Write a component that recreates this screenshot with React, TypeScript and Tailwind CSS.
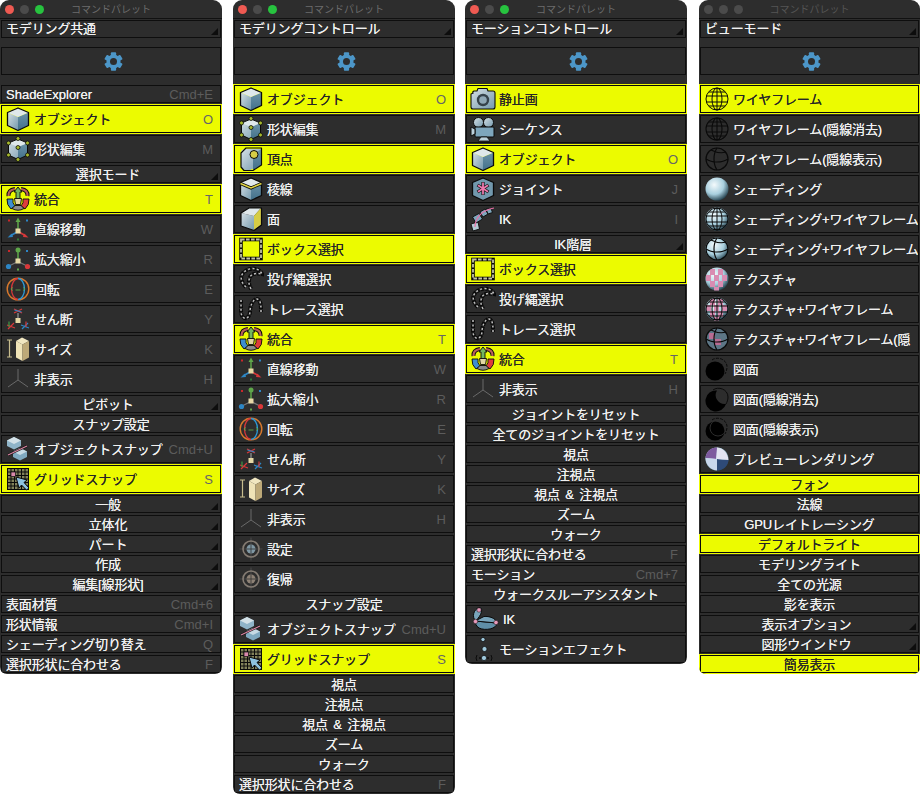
import type { ReactNode } from 'react'

type Row = {
  label: string
  kind: 'icon' | 'small' | 'center'
  icon?: ReactNode
  key?: string
  on?: boolean
  arrow?: boolean
}

const K = '#0a0a0a'

function Svg({ children }: { children: ReactNode }) {
  return (
    <svg viewBox="0 0 26 26" className="w-[26px] h-[26px] shrink-0" fill="none">
      {children}
    </svg>
  )
}

function CubeFaces({ right = 'url(#cubeR)' }: { right?: string }) {
  return (
    <>
      <path d="M13 11 L23.5 6.5 V19.5 L13 24.5z" fill={right} />
      <path d="M2.5 6.5 L13 11 V24.5 L2.5 19.5z" fill="url(#cubeL)" />
      <path d="M13 2 L23.5 6.5 L13 11 L2.5 6.5z" fill="#dfe8eb" />
      <path d="M13 2 L23.5 6.5 V19.5 L13 24.5 L2.5 19.5 V6.5z" stroke={K} strokeWidth="1.3" strokeLinejoin="round" />
    </>
  )
}

const Cube = () => <Svg><CubeFaces /></Svg>

function CubeEdit() {
  const pts = [[13, 2.5], [22.5, 7], [22.5, 19], [13, 23.5], [3.5, 19], [3.5, 7], [13, 11.5]]
  return (
    <Svg>
      <path d="M13 3 L22.5 7 V19 L13 23.5 L3.5 19 V7z" fill="url(#cubeL)" />
      <path d="M13 11 L22.5 7 V19 L13 23.5z" fill="url(#cubeR)" />
      <path d="M13 3 L22.5 7 L13 11 L3.5 7z" fill="#dfe8eb" />
      <path d="M13 3 L22.5 7 V19 L13 23.5 L3.5 19 V7z" stroke={K} strokeWidth="1" />
      {pts.map(([x, y]) => (
        <circle key={`${x}-${y}`} cx={x} cy={y} r="2" fill="#a6b92c" stroke={K} strokeWidth="0.8" />
      ))}
    </Svg>
  )
}

function Vertex() {
  return (
    <Svg>
      <path d="M3 7 Q3 3 7 3 L23 3 V19 L11 24.5 Q3 24 3 20z" fill="url(#cubeL)" />
      <path d="M15 24 L23.5 19 V3 L15 8z" fill="url(#cubeR)" />
      <path d="M3 7 L8 2 H23.5 V19 L15 24.5 H6 L3 21z" stroke={K} strokeWidth="1.2" strokeLinejoin="round" />
      <circle cx="16" cy="8.5" r="4" fill="#d6cd45" stroke={K} strokeWidth="1" />
    </Svg>
  )
}

function Edge() {
  return (
    <Svg>
      <CubeFaces />
      <path d="M2.5 7.5 L13 12 L23.5 7.5" stroke={K} strokeWidth="3" />
      <path d="M2.5 7.5 L13 12 L23.5 7.5" stroke="#e0d544" strokeWidth="1.6" />
    </Svg>
  )
}

function Face() {
  return (
    <Svg>
      <path d="M3 7 L16 10 V24.5 L3 20z" fill="url(#cubeL)" />
      <path d="M3 7 L11 2 H23 L16 10z" fill="#dfe8eb" />
      <path d="M16 10 L23 2 V19 L16 24.5z" fill="#d6cd45" />
      <path d="M3 7 L11 2 H23.5 V19 L16 24.5 L3 20z" stroke={K} strokeWidth="1.2" strokeLinejoin="round" />
    </Svg>
  )
}

function Merge() {
  return (
    <Svg>
      <path d="M3.5 10 Q3 4 10 3 M22.5 10 Q23 4 16 3" stroke={K} strokeWidth="4" />
      <path d="M3.5 10 Q3 4 10 3 M22.5 10 Q23 4 16 3" stroke="#b9605c" strokeWidth="2.2" />
      <path d="M2 13 Q1.5 19 6 23 L10 20 Q7 17 8 13z" fill="#3d8ed0" stroke={K} strokeWidth="0.9" />
      <path d="M24 13 Q24.5 19 20 23 L16 20 Q19 17 18 13z" fill="#de3c3c" stroke={K} strokeWidth="0.9" />
      <path d="M7 22.5 Q13 26 19 22.5 L16 19.5 H10z" fill="#8b8b8b" stroke={K} strokeWidth="0.9" />
      <path d="M13 1 L17 6 H15 V13 H11 V6 H9z" fill="#75b65f" stroke={K} strokeWidth="0.9" />
      <path d="M9.5 12.5 H16.5 L15.5 18.5 H10.5z" fill="#e3d7a5" stroke={K} strokeWidth="0.9" />
    </Svg>
  )
}

function Move() {
  return (
    <Svg>
      <path d="M13 14 V5" stroke="#5fa84a" strokeWidth="1.5" />
      <path d="M13 1.5 L15.5 6 H10.5z" fill="#5fa84a" />
      <path d="M12 16 L5 20" stroke="#2d86c5" strokeWidth="1.5" />
      <path d="M2.5 21.5 L7 17.5 L8 21z" fill="#2d86c5" />
      <path d="M14 16 L21 20" stroke="#d8383a" strokeWidth="1.5" />
      <path d="M23.5 21.5 L19 17.5 L18 21z" fill="#d8383a" />
      <rect x="10.5" y="12.5" width="5" height="5" fill="#e6d9a6" />
      <rect x="3" y="3.5" width="2" height="2" fill="#c8282b" />
      <rect x="21" y="3.5" width="2" height="2" fill="#2d86c5" />
      <rect x="12" y="22.5" width="2" height="2" fill="#2f7b39" />
    </Svg>
  )
}

function Scale() {
  return (
    <Svg>
      <path d="M13 14 V5" stroke="#5fa84a" strokeWidth="1.5" />
      <path d="M12 16 L5 19.5 M14 16 L21 19.5" stroke="#777" strokeWidth="1.2" />
      <circle cx="13" cy="4" r="2.5" fill="#5fa84a" />
      <circle cx="3.5" cy="20.5" r="2.6" fill="#2d86c5" />
      <circle cx="22.5" cy="20.5" r="2.6" fill="#d8383a" />
      <rect x="10.5" y="12.5" width="5" height="5" fill="#e6d9a6" />
      <rect x="3" y="4" width="2" height="2" fill="#c8282b" />
      <rect x="21" y="4" width="2" height="2" fill="#2d86c5" />
      <rect x="12" y="22.5" width="2" height="2" fill="#5fa84a" />
    </Svg>
  )
}

function Rotate() {
  return (
    <Svg>
      <circle cx="13" cy="13" r="10.8" stroke="#d9792d" strokeWidth="1.4" />
      <path d="M13 2.5 A6.5 10.5 0 0 0 13 23.5" stroke="#d8383a" strokeWidth="1.3" />
      <path d="M13 2.5 A6.5 10.5 0 0 1 13 23.5" stroke="#2d9ad8" strokeWidth="1.3" />
      <path d="M10.5 14 H15.5 M6 13 L8 11.5 M6 13 L8 14.5 M20 13 L18 11.5 M20 13 L18 14.5" stroke="#5fa84a" strokeWidth="0.9" />
    </Svg>
  )
}

function Shear() {
  return (
    <Svg>
      <path d="M13 12 V7" stroke="#888" strokeWidth="1.4" />
      <path d="M9 3 L17 7 M9 7 L17 3" stroke="#d8383a" strokeWidth="1.3" />
      <path d="M9.5 4 L16.5 6" stroke="#2d86c5" strokeWidth="1.2" />
      <rect x="10.5" y="12" width="5" height="5" fill="#e6d9a6" />
      <path d="M2 19 L10 22 M3 23 L9 17" stroke="#d8383a" strokeWidth="1.2" />
      <path d="M4 15.5 L4 21" stroke="#3f9a46" strokeWidth="1.2" />
      <path d="M16 19 L24 22 M17 23 L23 17" stroke="#2d86c5" strokeWidth="1.2" />
      <path d="M21 15.5 L21 21" stroke="#d8383a" strokeWidth="1.2" />
    </Svg>
  )
}

function Size() {
  return (
    <Svg>
      <path d="M2 4 H7 M4.5 4 V21 M2 21 H7" stroke="#c8bd8e" strokeWidth="1.2" />
      <path d="M11 5 L17 1.5 L24 5 L17.5 8.5z" fill="#f1e7c1" />
      <path d="M11 5 L17.5 8.5 V25 L11 21.5z" fill="#efe3b7" />
      <path d="M17.5 8.5 L24 5 V21.5 L17.5 25z" fill="#bda978" />
    </Svg>
  )
}

function Hide() {
  return (
    <Svg>
      <path d="M13 3 V14 L3 21 M13 14 L23 21" stroke="#6a6a6a" strokeWidth="1" />
    </Svg>
  )
}

function ObjSnap() {
  return (
    <Svg>
      <path d="M2 4.5 L9 1 L16 4.5 V10 L9 13.5 L2 10z" fill="#8fb4c8" />
      <path d="M2 4.5 L9 1 L16 4.5 L9 8z" fill="#d3e1e7" />
      <path d="M8 15.5 L15 12 L22 15.5 V21 L15 24.5 L8 21z" fill="#7fa9c0" />
      <path d="M8 15.5 L15 12 L22 15.5 L15 19z" fill="#c6dae4" />
      <path d="M3 19 L22 10" stroke="#111" strokeWidth="2.2" />
      <path d="M3 19 L22 10" stroke="#dc86a3" strokeWidth="1.1" />
    </Svg>
  )
}

function GridSnap() {
  const lines = [2.5, 6, 9.5, 13, 16.5, 20, 23.5]
  return (
    <Svg>
      <rect x="2" y="2" width="22" height="22" fill="#82825a" />
      {lines.map(v => (
        <g key={v}>
          <path d={`M${v} 2 V24`} stroke={K} strokeWidth="1" />
          <path d={`M2 ${v} H24`} stroke={K} strokeWidth="1" />
        </g>
      ))}
      <rect x="6" y="6" width="4.5" height="4.5" fill="#d989ab" stroke={K} strokeWidth="0.7" />
      <path d="M11 11 L22 14 L19 16.5 L24 22 L21.5 24 L16.5 19 L14 22z" fill="#8fc3e0" stroke={K} strokeWidth="1" strokeLinejoin="round" />
    </Svg>
  )
}

function BoxSel() {
  return (
    <Svg>
      <rect x="3" y="3.5" width="20" height="19" stroke={K} strokeWidth="3.6" />
      <rect x="3" y="3.5" width="20" height="19" stroke="#c2c2a4" strokeWidth="1.8" strokeDasharray="3.6 1.4" />
    </Svg>
  )
}

function Chain({ d }: { d: string }) {
  return (
    <Svg>
      <path d={d} stroke={K} strokeWidth="4" strokeDasharray="3.6 0.8" />
      <path d={d} stroke="#c0c0c0" strokeWidth="1.5" strokeDasharray="2 2.4" />
    </Svg>
  )
}

const Lasso = () => <Chain d="M8 21 C2 16 1 8 9 4 C15 1 22 3 24 8 C20 7 14 7 12 11 C10 15 11 19 13 23" />
const Trace = () => <Chain d="M3 4 V15 C3 24 11 25 12 16 C12 10 15 3 19 3 C23 4 23 10 23 16" />

function Target({ inner }: { inner: string }) {
  return (
    <Svg>
      <path d="M13 1.5 V24.5 M1.5 13 H24.5" stroke="#4a4a4a" strokeWidth="1" />
      <circle cx="13" cy="13" r="8" stroke="#857c73" strokeWidth="1.6" />
      <circle cx="13" cy="13" r="4.5" fill={inner} />
      <path d="M13 8.5 V17.5 M8.5 13 H17.5" stroke="#333" strokeWidth="0.8" />
    </Svg>
  )
}

function Camera() {
  return (
    <Svg>
      <path d="M3 7 Q2 6 4 5 H7 L8 2.5 H17 L18 5 H23 Q25 5 25 7 V21 Q25 23 23 23 H3 Q1 23 1 21 V8z" fill="url(#cubeL)" stroke={K} strokeWidth="1.1" />
      <circle cx="13" cy="14" r="6.2" fill="#35424b" />
      <circle cx="13" cy="14" r="3.8" fill="#8fa8b6" />
    </Svg>
  )
}

function Movie() {
  return (
    <Svg>
      <circle cx="8.5" cy="6.5" r="5" fill="url(#cubeL)" stroke={K} strokeWidth="1" />
      <circle cx="18.5" cy="6.5" r="5" fill="url(#cubeL)" stroke={K} strokeWidth="1" />
      <rect x="5" y="11" width="19" height="10" rx="1" fill="#7ea6bc" stroke={K} strokeWidth="1" />
      <path d="M5 13 L1 11 V20 L5 18z" fill="#bcd0da" stroke={K} strokeWidth="1" />
      <path d="M11 21 L8 25 H20 L17 21z" fill="#bcd0da" stroke={K} strokeWidth="0.8" />
    </Svg>
  )
}

function Joint() {
  return (
    <Svg>
      <path d="M13 2 L23.5 6.5 V19.5 L13 24.5 L2.5 19.5 V6.5z" fill="#7298ad" stroke={K} strokeWidth="1.3" strokeLinejoin="round" />
      <path d="M13 6 V19 M7.5 9 L18.5 16 M18.5 9 L7.5 16" stroke="#111" strokeWidth="3.2" />
      <path d="M13 6.5 V18.5 M8 9.3 L18 15.7 M18 9.3 L8 15.7" stroke="#ec79ad" strokeWidth="1.8" />
    </Svg>
  )
}

function IkChain() {
  return (
    <Svg>
      <path d="M1 18 L8 16 L9.5 23 L3 25z" fill="#b4cad6" stroke={K} strokeWidth="0.9" />
      <path d="M2.5 11 L9 7.5 L12.5 13 L6 17z" fill="#7ea6bc" stroke={K} strokeWidth="0.9" />
      <path d="M10 6 L15 3 L18 8 L13 11z" fill="#7ea6bc" stroke={K} strokeWidth="0.9" />
      <path d="M16 3 L21 2.5 L22.5 6.5 L18 8z" fill="#7ea6bc" stroke={K} strokeWidth="0.9" />
      <path d="M5 21 C5 12 12 4 24 2" stroke="#e76fa5" strokeWidth="1.2" />
    </Svg>
  )
}

function IkHand() {
  return (
    <svg viewBox="0 0 30 26" className="w-[30px] h-[26px] shrink-0" fill="none">
      <path d="M9 1.5 C13 1 13 8 5.5 15 C2 11 3 4 9 1.5z" fill="#78a4ba" stroke={K} strokeWidth="1" />
      <path d="M5 15 L27 17 C27 23 15 25 9 22 C6 20 5 17 5 15z" fill="#5f8ea6" stroke={K} strokeWidth="1" />
      <path d="M5 15 L14 10.5 C19 10 26 12 27 17z" fill="#78a4ba" stroke={K} strokeWidth="1" />
      <circle cx="9" cy="4" r="2.2" fill="#e79abb" stroke={K} strokeWidth="0.5" />
      <circle cx="5.5" cy="15.5" r="2.2" fill="#e79abb" stroke={K} strokeWidth="0.5" />
      <circle cx="26" cy="16.5" r="2.2" fill="#e79abb" stroke={K} strokeWidth="0.5" />
    </svg>
  )
}

function MotionFx() {
  return (
    <Svg>
      <circle cx="13" cy="3.5" r="2.1" fill="#9fc8dc" stroke={K} strokeWidth="0.7" />
      <circle cx="14.5" cy="13" r="2.5" fill="#9fc8dc" stroke={K} strokeWidth="0.7" />
      <circle cx="14" cy="22" r="2.6" fill="#9fc8dc" stroke={K} strokeWidth="0.7" />
      <path d="M7 19 Q5 22 7 25 M21 19 Q23 22 21 25" stroke={K} strokeWidth="1" />
      <circle cx="10" cy="22" r="0.9" fill={K} />
      <circle cx="18" cy="22" r="0.9" fill={K} />
    </Svg>
  )
}

function GridLines({ w = 1 }: { w?: number }) {
  return (
    <g stroke={K} strokeWidth={w}>
      <circle cx="13" cy="13" r="11" />
      <ellipse cx="13" cy="13" rx="5" ry="11" />
      <path d="M13 2 V24 M2.5 10 H23.5 M2.5 16 H23.5 M5 6 H21 M5 20 H21" />
    </g>
  )
}

function HiddenLines() {
  return (
    <g stroke={K} strokeWidth="1.2">
      <circle cx="13" cy="13" r="11" />
      <path d="M2 13 C8 17 18 17 24 13 M13 2 C9 8 9 18 13 24 M7 4 C13 7 19 7 22 6" />
    </g>
  )
}

const Wire = () => <Svg><GridLines w={1} /></Svg>
const WireHide = () => <Svg><GridLines w={1.1} /></Svg>
const WireShow = () => <Svg><HiddenLines /></Svg>
const Shade = () => <Svg><circle cx="13" cy="13" r="11.5" fill="url(#ball)" /></Svg>

const ShadeWire = () => (
  <Svg>
    <circle cx="13" cy="13" r="11.5" fill="url(#ball)" />
    <GridLines w={1} />
  </Svg>
)

const ShadeHidden = () => (
  <Svg>
    <circle cx="13" cy="13" r="11.5" fill="url(#ball)" />
    <HiddenLines />
  </Svg>
)

function Checks() {
  const cells = [[6, 3], [14, 3], [2, 9], [10, 9], [18, 9], [6, 15], [14, 15], [10, 21]]
  return (
    <>
      <circle cx="13" cy="13" r="11.5" fill="url(#ball)" />
      <g clipPath="url(#ballClip)">
        {cells.map(([x, y]) => (
          <rect key={`${x}-${y}`} x={x} y={y} width="5" height="6" fill="#d98cb2" />
        ))}
      </g>
    </>
  )
}

const Tex = () => <Svg><Checks /></Svg>

const TexWire = () => (
  <Svg>
    <Checks />
    <GridLines w={1} />
  </Svg>
)

const TexHidden = () => (
  <Svg>
    <circle cx="13" cy="13" r="11" fill="#5d7686" />
    <path d="M5 7 H11 V13 H5z M11 13 H17 V19 H11z" fill="#b86c92" />
    <HiddenLines />
  </Svg>
)

const Draw1 = () => (
  <Svg>
    <circle cx="11" cy="15" r="9.5" fill="#000" />
    <path d="M8 4 C13 0 23 3 23 11 C23 14 22 16 21 18" stroke={K} strokeWidth="1" strokeDasharray="3 1.2" />
  </Svg>
)

const Draw2 = () => (
  <Svg>
    <path d="M13 4.5 A10.5 10.5 0 1 0 22 18 A9 9 0 0 1 13 4.5z" fill="#000" />
    <path d="M9 4 C14 0 24 3 24 11 C24 14 23 16 22 18" stroke={K} strokeWidth="1" />
  </Svg>
)

const Draw3 = () => (
  <Svg>
    <circle cx="11" cy="15" r="9.5" fill="#000" />
    <circle cx="14" cy="12" r="8" stroke="#2d2d2d" strokeWidth="1" />
    <path d="M8 4 C13 0 23 3 23 11 C23 14 22 16 21 18" stroke={K} strokeWidth="1" strokeDasharray="3 1.2" />
  </Svg>
)

const Preview = () => (
  <Svg>
    <circle cx="13" cy="13" r="11.5" fill="url(#ball)" />
    <path d="M13 1.5 C6 1.5 2 6 1.5 12 L12 13z" fill="#7d5a9e" />
    <path d="M13 13 L24.5 14 C24 20 20 24 13 24.5z" fill="#2e4a78" />
    <path d="M13 13 L13 1.5 C19 2 24 7 24.5 14z" fill="#e3e4f2" />
    <path d="M13 13 L13 24.5 C7 24 2 20 1.5 12z" fill="#c9d7ec" />
  </Svg>
)

const sel = (label: string, arrow = false): Row => ({ label, kind: 'center', arrow })
const sm = (label: string, key?: string): Row => ({ label, kind: 'small', key })
const ic = (label: string, icon: ReactNode, key?: string, on = false): Row => ({ label, kind: 'icon', icon, key, on })

const panels: { title: string; rows: Row[]; lights?: boolean; box: string }[] = [
  {
    title: 'モデリング共通',
    lights: true,
    box: 'w-[222px]',
    rows: [
      sm('ShadeExplorer', 'Cmd+E'),
      ic('オブジェクト', <Cube />, 'O', true),
      ic('形状編集', <CubeEdit />, 'M'),
      sel('選択モード', true),
      ic('統合', <Merge />, 'T', true),
      ic('直線移動', <Move />, 'W'),
      ic('拡大縮小', <Scale />, 'R'),
      ic('回転', <Rotate />, 'E'),
      ic('せん断', <Shear />, 'Y'),
      ic('サイズ', <Size />, 'K'),
      ic('非表示', <Hide />, 'H'),
      sel('ピボット', true),
      sel('スナップ設定'),
      ic('オブジェクトスナップ', <ObjSnap />, 'Cmd+U'),
      ic('グリッドスナップ', <GridSnap />, 'S', true),
      sel('一般', true),
      sel('立体化', true),
      sel('パート', true),
      sel('作成', true),
      sel('編集[線形状]', true),
      sm('表面材質', 'Cmd+6'),
      sm('形状情報', 'Cmd+I'),
      sm('シェーディング切り替え', 'Q'),
      sm('選択形状に合わせる', 'F'),
    ],
  },
  {
    title: 'モデリングコントロール',
    lights: true,
    box: 'w-[222px] ml-[11px]',
    rows: [
      ic('オブジェクト', <Cube />, 'O', true),
      ic('形状編集', <CubeEdit />, 'M'),
      ic('頂点', <Vertex />, undefined, true),
      ic('稜線', <Edge />),
      ic('面', <Face />),
      ic('ボックス選択', <BoxSel />, undefined, true),
      ic('投げ縄選択', <Lasso />),
      ic('トレース選択', <Trace />),
      ic('統合', <Merge />, 'T', true),
      ic('直線移動', <Move />, 'W'),
      ic('拡大縮小', <Scale />, 'R'),
      ic('回転', <Rotate />, 'E'),
      ic('せん断', <Shear />, 'Y'),
      ic('サイズ', <Size />, 'K'),
      ic('非表示', <Hide />, 'H'),
      ic('設定', <Target inner="#7f97a3" />),
      ic('復帰', <Target inner="#8d8175" />),
      sel('スナップ設定'),
      ic('オブジェクトスナップ', <ObjSnap />, 'Cmd+U'),
      ic('グリッドスナップ', <GridSnap />, 'S', true),
      sel('視点'),
      sel('注視点'),
      sel('視点 & 注視点'),
      sel('ズーム'),
      sel('ウォーク'),
      sm('選択形状に合わせる', 'F'),
    ],
  },
  {
    title: 'モーションコントロール',
    lights: true,
    box: 'w-[222px] ml-[10px]',
    rows: [
      ic('静止画', <Camera />, undefined, true),
      ic('シーケンス', <Movie />),
      ic('オブジェクト', <Cube />, 'O', true),
      ic('ジョイント', <Joint />, 'J'),
      ic('IK', <IkChain />, 'I'),
      sel('IK階層', true),
      ic('ボックス選択', <BoxSel />, undefined, true),
      ic('投げ縄選択', <Lasso />),
      ic('トレース選択', <Trace />),
      ic('統合', <Merge />, 'T', true),
      ic('非表示', <Hide />, 'H'),
      sel('ジョイントをリセット'),
      sel('全てのジョイントをリセット'),
      sel('視点'),
      sel('注視点'),
      sel('視点 & 注視点'),
      sel('ズーム'),
      sel('ウォーク'),
      sm('選択形状に合わせる', 'F'),
      sm('モーション', 'Cmd+7'),
      sel('ウォークスルーアシスタント'),
      ic('IK', <IkHand />),
      ic('モーションエフェクト', <MotionFx />),
    ],
  },
  {
    title: 'ビューモード',
    box: 'w-[221px] ml-[12px]',
    rows: [
      ic('ワイヤフレーム', <Wire />, undefined, true),
      ic('ワイヤフレーム(隠線消去)', <WireHide />),
      ic('ワイヤフレーム(隠線表示)', <WireShow />),
      ic('シェーディング', <Shade />),
      ic('シェーディング+ワイヤフレーム', <ShadeWire />),
      ic('シェーディング+ワイヤフレーム', <ShadeHidden />),
      ic('テクスチャ', <Tex />),
      ic('テクスチャ+ワイヤフレーム', <TexWire />),
      ic('テクスチャ+ワイヤフレーム(隠', <TexHidden />),
      ic('図面', <Draw1 />),
      ic('図面(隠線消去)', <Draw2 />),
      ic('図面(隠線表示)', <Draw3 />),
      ic('プレビューレンダリング', <Preview />),
      { ...sel('フォン'), on: true },
      sel('法線'),
      sel('GPUレイトレーシング'),
      { ...sel('デフォルトライト'), on: true },
      sel('モデリングライト'),
      sel('全ての光源'),
      sel('影を表示'),
      sel('表示オプション', true),
      sel('図形ウインドウ', true),
      { ...sel('簡易表示'), on: true },
    ],
  },
]

function Corner() {
  return <span className="absolute right-[2px] bottom-[2px] w-[7px] h-[7px] bg-[#0d0d0d] [clip-path:polygon(100%_0,100%_100%,0_100%)]" />
}

function PaletteRow({ row }: { row: Row }) {
  const tone = row.on
    ? 'bg-[#ecfb00] border-[#0a0a0a] ring-1 ring-[#ecfb00] text-[#262626]'
    : 'bg-[#2d2d2d] border-[#0e0e0e] text-[#f0f0f0]'
  const height = row.kind === 'icon' ? 'h-[28px]' : 'h-[18px]'
  let align = 'pl-[3px]'
  if (row.kind === 'small') align = 'pl-[4px]'
  if (row.kind === 'center') align = row.arrow ? 'justify-center pr-[6px]' : 'justify-center'
  const ascii = /^[ -~]+$/.test(row.label)
  return (
    <div className={`relative flex items-center mx-[1px] border shrink-0 whitespace-nowrap overflow-hidden ${height} ${tone} ${align}`}>
      {row.icon}
      <span className={`pt-[1px] ${row.kind === 'icon' ? 'ml-[3px]' : ''} ${ascii ? '' : 'tracking-[-0.15px]'}`}>{row.label}</span>
      {row.key && (
        <span className={`ml-auto pr-[7px] pt-[1px] [text-shadow:none] ${row.on ? 'text-[#666666]' : 'text-[#5c5c5c]'}`}>{row.key}</span>
      )}
      {row.arrow && <Corner />}
    </div>
  )
}

function Gear() {
  const teeth = [0, 60, 120]
  return (
    <svg viewBox="0 0 24 24" className="w-[21px] h-[21px]">
      {teeth.map(a => (
        <rect key={a} x="9" y="1.5" width="6" height="21" rx="1" fill="#4c96c8" transform={`rotate(${a} 12 12)`} />
      ))}
      <circle cx="12" cy="12" r="8" fill="#4c96c8" />
      <circle cx="12" cy="12" r="4" fill="#2d2d2d" />
    </svg>
  )
}

function Panel({ title, rows, lights, box }: (typeof panels)[number]) {
  return (
    <div className={`shrink-0 self-start flex flex-col bg-[#2d2d2d] rounded-t-[9px] rounded-b-[7px] overflow-hidden pb-[1px] ${box}`}>
      <div className={`relative h-[19px] flex items-center justify-center border-b border-[#111] text-[10px] [text-shadow:none] ${lights ? 'text-[#6c6c6c]' : 'text-[#555555]'}`}>
        <div className="absolute left-[5px] top-[4.5px] flex gap-[6px]">
          <span className={`w-[9px] h-[9px] rounded-full ${lights ? 'bg-[#ef5a52]' : 'bg-[#4b4b4b]'}`} />
          <span className="w-[9px] h-[9px] rounded-full bg-[#4b4b4b]" />
          <span className={`w-[9px] h-[9px] rounded-full ${lights ? 'bg-[#27c33f]' : 'bg-[#4b4b4b]'}`} />
        </div>
        コマンドパレット
      </div>
      <div className="relative h-[18px] mt-[1px] mx-[1px] flex items-center pl-[4px] border border-[#0e0e0e] text-[#f0f0f0] tracking-[-0.15px]">
        {title}
        <Corner />
      </div>
      <div className="h-[28px] mx-[1px] mt-[9px] mb-[10px] pl-[4px] flex items-center justify-center border border-[#0e0e0e]">
        <Gear />
      </div>
      <div className="flex flex-col gap-[2px]">
        {rows.map((r, i) => (
          <PaletteRow key={i} row={r} />
        ))}
      </div>
    </div>
  )
}

export default function App() {
  return (
    <div className="w-[920px] h-[794px] bg-white overflow-hidden text-[13px] [word-spacing:2px] font-['Liberation_Sans','Noto_Sans_CJK_JP',sans-serif] [text-shadow:0_0_0.4px_currentColor]">
      <svg className="block w-0 h-0">
        <defs>
          <linearGradient id="cubeL" x1="0" y1="0" x2="1" y2="1">
            <stop offset="0" stopColor="#d6e0e5" />
            <stop offset="1" stopColor="#7399ad" />
          </linearGradient>
          <linearGradient id="cubeR" x1="0" y1="0" x2="0" y2="1">
            <stop offset="0" stopColor="#6b93a8" />
            <stop offset="1" stopColor="#42708a" />
          </linearGradient>
          <radialGradient id="ball" cx="0.38" cy="0.32" r="0.75">
            <stop offset="0" stopColor="#f4fafc" />
            <stop offset="0.55" stopColor="#a8cfde" />
            <stop offset="1" stopColor="#16323f" />
          </radialGradient>
          <clipPath id="ballClip">
            <circle cx="13" cy="13" r="11.5" />
          </clipPath>
        </defs>
      </svg>
      <div className="flex">
        {panels.map(p => (
          <Panel key={p.title} {...p} />
        ))}
      </div>
    </div>
  )
}
